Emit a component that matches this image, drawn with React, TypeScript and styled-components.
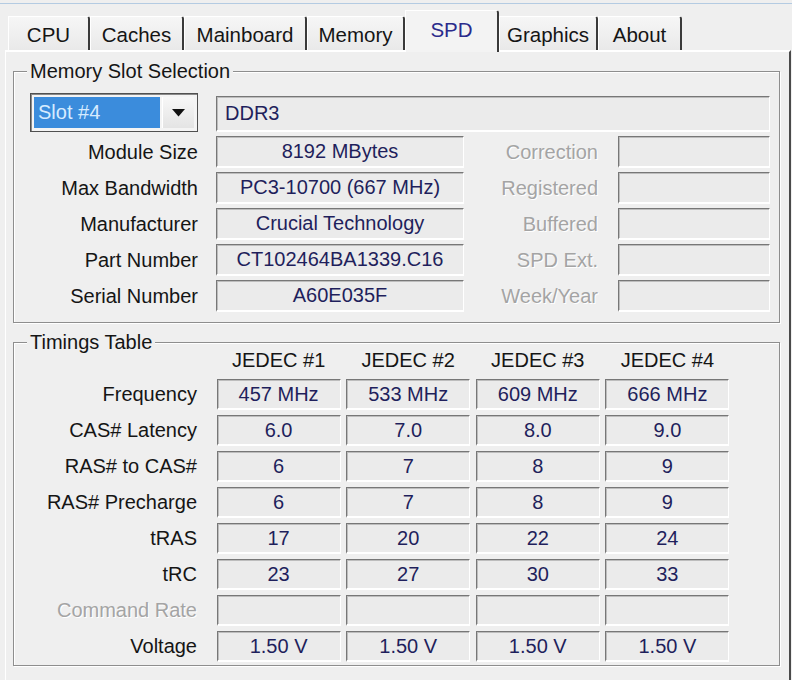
import React from "react";
import styled, { createGlobalStyle } from "styled-components";

const GlobalStyle = createGlobalStyle`
  html, body {
    margin: 0;
    padding: 0;
    background: #efefef;
  }
  body {
    font-family: "Liberation Sans", Arial, sans-serif;
    font-size: 20px;
    color: #151515;
  }
`;

const Window = styled.div`
  width: 792px;
  height: 680px;
  overflow: hidden;
  background: #efefef;
  display: flex;
  flex-direction: column;
`;

const TopRule = styled.div`
  height: 1px;
  margin-top: 3px;
  background: #b4cbe2;
`;

const TabStrip = styled.div`
  display: flex;
  align-items: flex-end;
  height: 46px;
  padding-left: 8px;
`;

const Tab = styled.div<{ $w: number; $active?: boolean }>`
  position: relative;
  z-index: ${(p) => (p.$active ? 2 : 0)};
  box-sizing: border-box;
  width: ${(p) => p.$w}px;
  height: ${(p) => (p.$active ? 42 : 34)}px;
  margin-bottom: ${(p) => (p.$active ? -2 : 0)}px;
  padding-bottom: ${(p) => (p.$active ? 6 : 0)}px;
  padding-top: 2px;
  display: flex;
  align-items: center;
  justify-content: center;
  border-top: 1px solid #ffffff;
  border-left: 1px solid #ffffff;
  border-right: 2px solid #3a3a3a;
  border-top-right-radius: 3px;
  background: ${(p) =>
    p.$active ? "#f3f3f3" : "linear-gradient(#f6f6f6, #e9e9e9)"};
  color: ${(p) => (p.$active ? "#2b2b8c" : "#151515")};
  font-size: 20.5px;
`;

const Panel = styled.div`
  position: relative;
  z-index: 1;
  box-sizing: border-box;
  width: 786px;
  height: 630px;
  margin-left: 5px;
  padding: 9px 9px 0 7px;
  border-top: 2px solid #ffffff;
  border-left: 1px solid #ffffff;
  border-right: 2px solid #4a4a4a;
  background: #efefef;
  display: flex;
  flex-direction: column;
  gap: 9px;
`;

const Group = styled.fieldset<{ $top: number; $bottom: number }>`
  margin: 0;
  padding: ${(p) => p.$top}px 9px ${(p) => p.$bottom}px 0;
  min-inline-size: 0;
  border: 1px solid #8e8e8e;
  box-shadow: 1px 1px 0 #ffffff, inset 1px 1px 0 #ffffff;
`;

const GroupTitle = styled.legend`
  margin-left: 13px;
  padding: 0 3px;
  line-height: 20px;
  font-size: 20px;
  background: #efefef;
  color: #151515;
`;

const SlotGrid = styled.div`
  display: grid;
  grid-template-columns: 202px 248px 154px 152px;
  grid-template-rows: 39px;
  grid-auto-rows: 32px;
  row-gap: 4px;
  padding-bottom: 2px;
`;

const SlotTop = styled.div`
  grid-column: 1 / -1;
  display: grid;
  grid-template-columns: 202px 1fr;
  height: 39px;
`;

const Dropdown = styled.div`
  box-sizing: border-box;
  margin-left: 16px;
  width: 168px;
  height: 39px;
  padding: 3px;
  display: flex;
  gap: 2px;
  border: 1px solid #505050;
  box-shadow: inset 1px 1px 0 #8a8a8a;
  background: #f4f4f4;
`;

const DropValue = styled.div`
  flex: 1;
  display: flex;
  align-items: center;
  padding-left: 4px;
  background: #3b8cdc;
  color: #d6ebff;
`;

const DropButton = styled.div`
  width: 31px;
  display: flex;
  align-items: center;
  justify-content: center;
  border-left: 1px solid #ffffff;
  background: linear-gradient(#f7f7f7, #e4e4e4);
`;

const Field = styled.div<{ $left?: boolean }>`
  box-sizing: border-box;
  height: 32px;
  display: flex;
  align-items: center;
  justify-content: ${(p) => (p.$left ? "flex-start" : "center")};
  padding-left: ${(p) => (p.$left ? 8 : 0)}px;
  border-top: 1px solid #777777;
  border-left: 1px solid #777777;
  border-bottom: 2px solid #ffffff;
  border-right: 1px solid #ffffff;
  box-shadow: inset 1px 1px 0 #bdbdbd;
  background: #ebebeb;
  color: #1f1f5c;
  white-space: nowrap;
  overflow: hidden;
`;

const WideField = styled(Field)`
  height: 36px;
  margin-top: 3px;
`;

const Label = styled.div<{ $dim?: boolean; $pad: number }>`
  display: flex;
  align-items: center;
  justify-content: flex-end;
  padding-right: ${(p) => p.$pad}px;
  white-space: nowrap;
  color: ${(p) => (p.$dim ? "#a4a4a4" : "#151515")};
  text-shadow: ${(p) => (p.$dim ? "1px 1px 0 #ffffff" : "none")};
`;

const TimingGrid = styled.div`
  display: grid;
  grid-template-columns: 197px repeat(4, 124px);
  grid-template-rows: 22px;
  grid-auto-rows: 31px;
  column-gap: 5.6px;
  row-gap: 5px;
`;

const ColHead = styled.div`
  display: flex;
  align-items: center;
  justify-content: center;
  padding-bottom: 6px;
  color: #151515;
  white-space: nowrap;
`;

const Cell = styled(Field)`
  height: 31px;
`;

const tabs = [
  { name: "CPU", w: 82 },
  { name: "Caches", w: 94 },
  { name: "Mainboard", w: 123 },
  { name: "Memory", w: 98 },
  { name: "SPD", w: 94, active: true },
  { name: "Graphics", w: 99 },
  { name: "About", w: 84 },
];

const slotRows = [
  { label: "Module Size", value: "8192 MBytes", side: "Correction" },
  { label: "Max Bandwidth", value: "PC3-10700 (667 MHz)", side: "Registered" },
  { label: "Manufacturer", value: "Crucial Technology", side: "Buffered" },
  { label: "Part Number", value: "CT102464BA1339.C16", side: "SPD Ext." },
  { label: "Serial Number", value: "A60E035F", side: "Week/Year" },
];

const timings: { label: string; dim?: boolean; values: string[] }[] = [
  { label: "Frequency", values: ["457 MHz", "533 MHz", "609 MHz", "666 MHz"] },
  { label: "CAS# Latency", values: ["6.0", "7.0", "8.0", "9.0"] },
  { label: "RAS# to CAS#", values: ["6", "7", "8", "9"] },
  { label: "RAS# Precharge", values: ["6", "7", "8", "9"] },
  { label: "tRAS", values: ["17", "20", "22", "24"] },
  { label: "tRC", values: ["23", "27", "30", "33"] },
  { label: "Command Rate", dim: true, values: ["", "", "", ""] },
  { label: "Voltage", values: ["1.50 V", "1.50 V", "1.50 V", "1.50 V"] },
];

const App: React.FC = () => {
  return (
    <Window>
      <GlobalStyle />
      <TopRule />
      <TabStrip>
        {tabs.map((t) => (
          <Tab key={t.name} $w={t.w} $active={t.active}>
            {t.name}
          </Tab>
        ))}
      </TabStrip>
      <Panel>
        <Group $top={12} $bottom={8}>
          <GroupTitle>Memory Slot Selection</GroupTitle>
          <SlotGrid>
            <SlotTop>
              <Dropdown>
                <DropValue>Slot #4</DropValue>
                <DropButton>
                  <svg width="13" height="8" viewBox="0 0 13 8">
                    <polygon points="0,0 13,0 6.5,7.5" fill="#111" />
                  </svg>
                </DropButton>
              </Dropdown>
              <WideField $left>DDR3</WideField>
            </SlotTop>
            {slotRows.map((r) => (
              <React.Fragment key={r.label}>
                <Label $pad={18}>{r.label}</Label>
                <Field>{r.value}</Field>
                <Label $pad={20} $dim>
                  {r.side}
                </Label>
                <Field />
              </React.Fragment>
            ))}
          </SlotGrid>
        </Group>
        <Group $top={0} $bottom={3}>
          <GroupTitle>Timings Table</GroupTitle>
          <TimingGrid>
            <div />
            {[1, 2, 3, 4].map((n) => (
              <ColHead key={n}>JEDEC #{n}</ColHead>
            ))}
            {timings.map((row) => (
              <React.Fragment key={row.label}>
                <Label $pad={14} $dim={row.dim}>
                  {row.label}
                </Label>
                {row.values.map((v, i) => (
                  <Cell key={i}>{v}</Cell>
                ))}
              </React.Fragment>
            ))}
          </TimingGrid>
        </Group>
      </Panel>
    </Window>
  );
};

export default App;
